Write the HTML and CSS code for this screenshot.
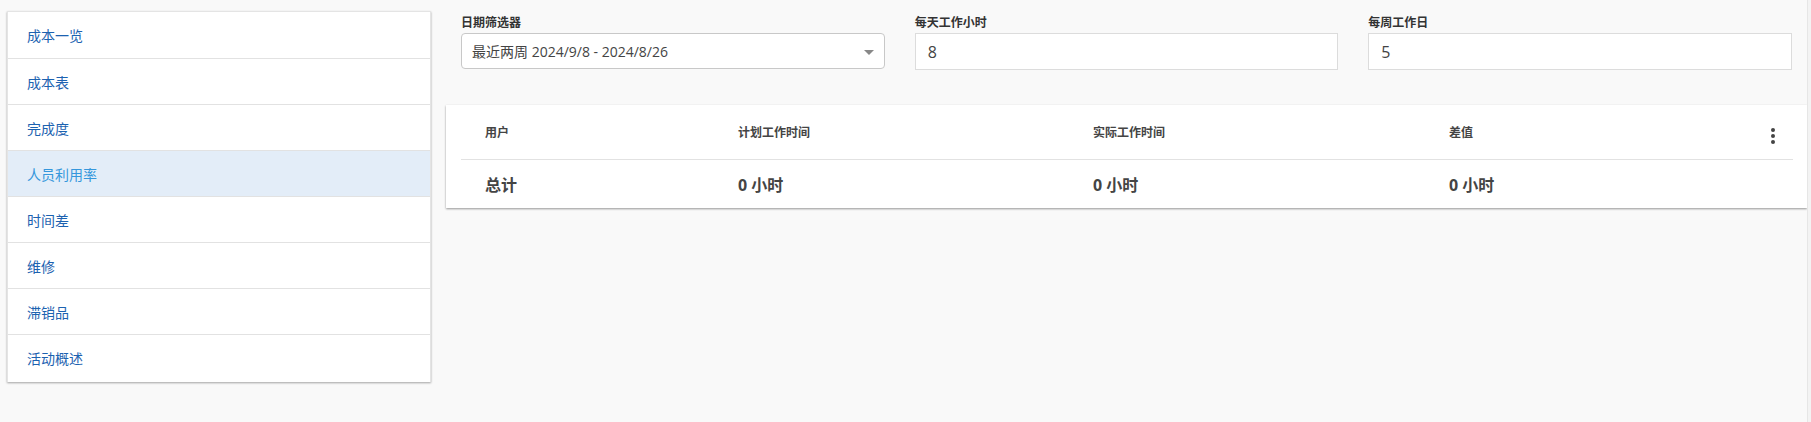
FILE: index.html
```html
<!DOCTYPE html>
<html lang="zh">
<head>
<meta charset="utf-8">
<title>人员利用率</title>
<link rel="stylesheet" href="styles.css">
</head>
<body>
<div class="page">
  <nav class="sidebar">
    <a class="nav-item">成本一览</a>
    <a class="nav-item">成本表</a>
    <a class="nav-item">完成度</a>
    <a class="nav-item active">人员利用率</a>
    <a class="nav-item">时间差</a>
    <a class="nav-item">维修</a>
    <a class="nav-item">滞销品</a>
    <a class="nav-item">活动概述</a>
  </nav>
  <main class="main">
    <div class="filters">
      <div class="field">
        <label class="label">日期筛选器</label>
        <div class="select">
          <span>最近两周 2024/9/8 - 2024/8/26</span>
          <span class="caret"></span>
        </div>
      </div>
      <div class="field">
        <label class="label">每天工作小时</label>
        <div class="input">8</div>
      </div>
      <div class="field">
        <label class="label">每周工作日</label>
        <div class="input">5</div>
      </div>
    </div>
    <div class="card">
      <div class="row head">
        <div class="cell c1">用户</div>
        <div class="cell c2">计划工作时间</div>
        <div class="cell c3">实际工作时间</div>
        <div class="cell c4">差值</div>
        <div class="cell c5">
          <svg width="4" height="16" viewBox="0 0 4 16"><circle cx="2" cy="2" r="2" fill="#444"/><circle cx="2" cy="8" r="2" fill="#444"/><circle cx="2" cy="14" r="2" fill="#444"/></svg>
        </div>
      </div>
      <div class="row body">
        <div class="cell c1">总计</div>
        <div class="cell c2">0 小时</div>
        <div class="cell c3">0 小时</div>
        <div class="cell c4">0 小时</div>
        <div class="cell c5"></div>
      </div>
    </div>
  </main>
  <div class="scroll-edge"></div>
</div>
</body>
</html>
```

FILE: styles.css
```css
* { box-sizing: border-box; }
html, body { margin: 0; padding: 0; }
body {
  background: #f9f9f9;
  font-family: "Open Sans", "Noto Sans CJK SC", sans-serif;
  color: #444;
  width: 1811px;
  height: 422px;
  overflow: hidden;
}
.page {
  display: flex;
  align-items: flex-start;
  height: 422px;
}
.sidebar {
  margin: 11px 0 0 7px;
  width: 424px;
  background: #fff;
  border: 1px solid #e4e4e4;
  border-bottom: none;
  box-shadow: 0 1px 2px rgba(0,0,0,0.35);
  display: flex;
  flex-direction: column;
  padding-bottom: 2px;
}
.nav-item {
  height: 46px;
  display: flex;
  align-items: center;
  padding-left: 19px;
  font-size: 14px;
  color: #1c62b0;
  border-top: 1px solid #e2e2e2;
}
.nav-item:first-child { border-top: none; }
.nav-item.active {
  background: #e3edf8;
  color: #3597dc;
}
.main {
  margin-left: 15px;
  width: 1361px;
  display: flex;
  flex-direction: column;
}
.filters {
  display: flex;
  gap: 30px;
  padding: 15px 15px 0 15px;
  height: 105px;
}
.field {
  flex: 1;
  display: flex;
  flex-direction: column;
}
.label {
  font-size: 12px;
  font-weight: 600;
  color: #333;
  line-height: 16px;
  height: 16px;
  margin-bottom: 2px;
}
.select {
  height: 36px;
  background: #fff;
  border: 1px solid #c8c8c8;
  border-radius: 4px;
  display: flex;
  align-items: center;
  justify-content: space-between;
  padding: 0 10px 0 10px;
  font-size: 14px;
  color: #444;
}
.caret {
  width: 0;
  height: 0;
  border-left: 5px solid transparent;
  border-right: 5px solid transparent;
  border-top: 5px solid #888;
  margin-top: 2px;
}
.input {
  height: 37px;
  background: #fff;
  border: 1px solid #dcdcdc;
  display: flex;
  align-items: center;
  padding-left: 12px;
  font-size: 16px;
  color: #444;
}
.card {
  background: #fff;
  box-shadow: 0 1px 2px rgba(0,0,0,0.4);
  padding: 0 14px 0 15px;
  width: 1361px;
}
.row {
  display: flex;
  align-items: center;
}
.row.head {
  height: 55px;
  border-bottom: 1px solid #e2e2e2;
  font-size: 12px;
  font-weight: 600;
  color: #444;
}
.row.body {
  height: 48px;
  font-size: 16px;
  font-weight: 700;
  color: #444;
}
.cell { padding-left: 24px; }
.c1 { width: 253px; }
.c2 { width: 355px; }
.c3 { width: 356px; }
.c4 { width: 320px; }
.c5 { flex: 1; display: flex; justify-content: flex-end; padding-right: 18px; }
.row.head .c5 { padding-top: 8px; }
.scroll-edge {
  margin-left: auto;
  width: 4px;
  height: 422px;
  border-left: 1px solid #e6e6e6;
  background: #f3f3f3;
}
```
